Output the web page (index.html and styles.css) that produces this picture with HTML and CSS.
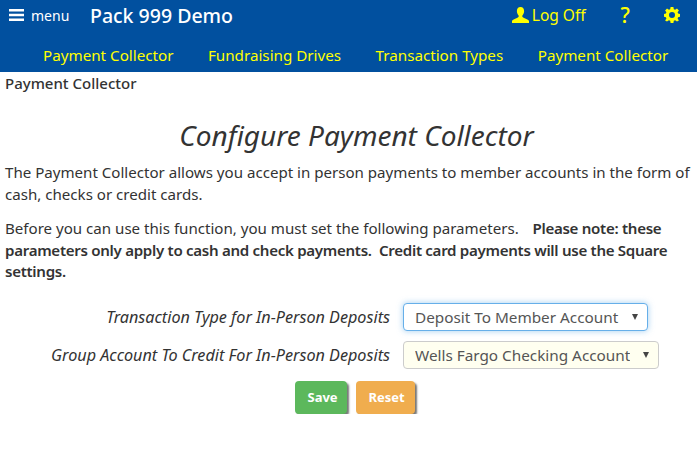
FILE: index.html
```html
<!DOCTYPE html>
<html lang="en">
  <head>
    <meta charset="utf-8" />
    <meta name="viewport" content="width=device-width, initial-scale=1" />
    <title>Configure Payment Collector</title>
    <link rel="stylesheet" href="styles.css">
  </head>
  <body>
    <header class="site-header">
      <div class="top-bar">
        <a class="menu-toggle">
          <svg class="menu-icon" viewBox="0 0 15 12" width="15" height="12"><path d="M0 0h15v2.4H0zM0 4.8h15v2.4H0zM0 9.600h15V12H0z" fill="#fff"/></svg>
          <span>menu</span>
        </a>
        <a class="brand">Pack 999 Demo</a>
        <div class="top-links">
          <a class="log-off">
            <svg viewBox="0 0 17 16" width="17" height="16"><path d="M8.500 0C6 0 4.700 2 4.900 4.500c.1 1.800.9 3.200 1.700 4 .3.900 0 1.500-.7 1.900C4 11.400 1.200 12.300 0 13.700V16h17v-2.300c-1.200-1.400-4-2.300-5.900-3.300-.7-.4-1-1-.7-1.900.8-.8 1.600-2.200 1.700-4C12.300 2 11 0 8.500 0z" fill="#ff0"/></svg>
            <span>Log Off</span>
          </a>
          <a class="help">?</a>
          <a class="settings">
            <svg viewBox="0 0 16 16" width="16" height="16"><path fill-rule="evenodd" d="M6.600 0h2.800l.4 2.200 1.300.6L13 1.500 14.900 3.400l-1.300 1.900.5 1.300L16 7v2.800l-1.900.4-.5 1.300 1.300 1.900L13 14.500l-1.900-1.300-1.300.5-.4 2.300H6.600l-.4-2.300-1.300-.5L3 14.500 1.100 13.400l1.300-1.900-.5-1.300L0 9.800V7l1.900-.4.500-1.300L1.100 3.400 3 1.500l1.900 1.300 1.300-.6zM8 5a3 3 0 1 0 0 6 3 3 0 0 0 0-6z" fill="#ff0"/></svg>
          </a>
        </div>
      </div>
      <nav class="main-nav">
        <a>Payment Collector</a>
        <a>Fundraising Drives</a>
        <a>Transaction Types</a>
        <a>Payment Collector</a>
      </nav>
    </header>
    <main class="content">
      <div class="breadcrumb">Payment Collector</div>
      <h1 class="page-title">Configure Payment Collector</h1>
      <p class="intro">The Payment Collector allows you accept in person payments to member accounts in the form of cash, checks or credit cards.</p>
      <p class="intro">Before you can use this function, you must set the following parameters. &nbsp; <strong class="note">Please note: these parameters only apply to cash and check payments. &nbsp;Credit card payments will use the Square settings.</strong></p>
      <form class="settings-form">
        <div class="form-row">
          <label class="form-label" for="txn-type">Transaction Type for In-Person Deposits</label>
          <div class="select-wrap">
            <select id="txn-type" class="form-select focused">
              <option>Deposit To Member Account</option>
            </select>
          </div>
        </div>
        <div class="form-row">
          <label class="form-label" for="group-account">Group Account To Credit For In-Person Deposits</label>
          <div class="select-wrap">
            <select id="group-account" class="form-select autofilled">
              <option>Wells Fargo Checking Account</option>
            </select>
          </div>
        </div>
        <div class="form-actions">
          <button type="button" class="btn btn-save">Save</button>
          <button type="button" class="btn btn-reset">Reset</button>
        </div>
      </form>
    </main>
  </body>
</html>
```

FILE: styles.css
```css
body {
  margin: 0;
  background-color: #fff;
  color: #333;
  font-family: "Noto Sans", "Open Sans", sans-serif;
  font-size: 15px;
}

a {
  text-decoration: none;
}

.site-header {
  background-color: #01509f;
  height: 72px;
}

.top-bar {
  display: flex;
  align-items: center;
  height: 30px;
  padding: 0 17px 0 9px;
}

.menu-toggle {
  display: flex;
  align-items: center;
  gap: 7px;
  width: 81px;
  color: #fff;
  font-size: 14px;
}

.brand {
  color: #fff;
  font-size: 19.5px;
  font-weight: 500;
}

.top-links {
  display: flex;
  align-items: center;
  margin-left: auto;
  color: #ff0;
}

.log-off {
  display: flex;
  align-items: center;
  gap: 3px;
  font-size: 15.500px;
}

.help {
  margin-left: 35px;
  font-size: 21px;
  font-weight: 500;
}

.settings {
  display: flex;
  margin-left: 34px;
}

.main-nav {
  display: flex;
  gap: 34.500px;
  padding: 15px 0 0 43px;
  color: #ff0;
  font-size: 15.200px;
}

.content {
  padding: 0 5px;
}

.breadcrumb {
  padding-top: 2px;
  font-size: 15px;
  font-weight: 500;
  line-height: 18px;
}

.page-title {
  margin: 26px 0 10px;
  padding-left: 16px;
  font-size: 28px;
  font-weight: 400;
  font-style: italic;
  line-height: 34px;
  text-align: center;
}

.intro {
  margin: 0 0 13px;
  font-size: 15.100px;
  line-height: 21.600px;
}

.note {
  margin-left: 2px;
  font-weight: 600;
  letter-spacing: -0.3px;
}

.settings-form {
  margin-top: 20px;
}

.form-row {
  display: flex;
  align-items: center;
  margin-bottom: 10px;
}

.form-label {
  width: 385px;
  font-style: italic;
  font-size: 16.200px;
  text-align: right;
  white-space: nowrap;
}

.select-wrap {
  position: relative;
  margin-left: 13px;
}

.select-wrap::after {
  content: "";
  position: absolute;
  top: 11px;
  right: 10px;
  border-left: 3.500px solid transparent;
  border-right: 3.500px solid transparent;
  border-top: 6px solid #444;
  pointer-events: none;
}

.form-select {
  display: block;
  height: 28px;
  padding: 0 28px 0 11px;
  border: 1px solid #ccc;
  border-radius: 4px;
  appearance: none;
  background-color: #fff;
  color: #555;
  font-family: inherit;
  font-size: 15.300px;
}

.form-select.focused {
  width: 245px;
  border-color: #66afe9;
  box-shadow: 0 0 6px rgba(102, 175, 233, 0.6);
}

.form-select.autofilled {
  width: 256px;
  background-color: #fffff0;
}

.form-actions {
  display: flex;
  justify-content: center;
  gap: 9px;
  margin: 12px 0 0 12px;
}

.btn {
  height: 33px;
  padding: 0 12px;
  border: 1px solid transparent;
  border-radius: 4px;
  box-shadow: 2px 2px 2px #777;
  color: #fff;
  font-family: inherit;
  font-size: 13px;
  font-weight: 700;
}

.btn-save {
  width: 52px;
  background-color: #5cb85c;
}

.btn-reset {
  width: 59px;
  background-color: #f0ad4e;
}
```
